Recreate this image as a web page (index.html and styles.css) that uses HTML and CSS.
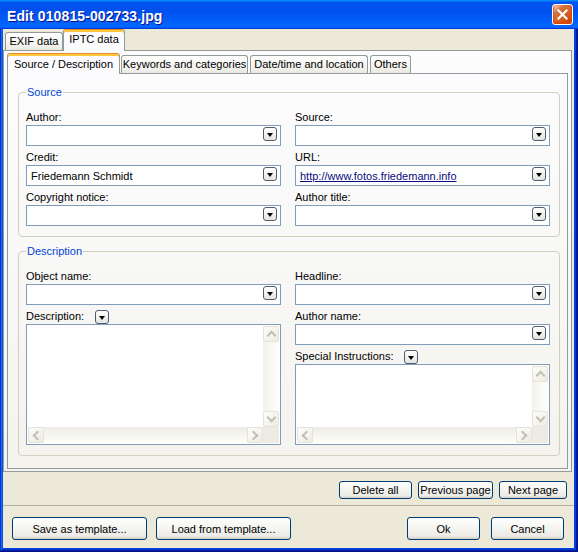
FILE: index.html
```html
<!DOCTYPE html>
<html>
<head>
<meta charset="utf-8">
<title>Edit 010815-002733.jpg</title>
<link rel="stylesheet" href="styles.css">
</head>
<body>
<div class="window">
  <div class="titlebar">
    <span class="title">Edit 010815-002733.jpg</span>
    <span class="close"><svg width="13" height="13" viewBox="0 0 13 13"><path d="M2.5 2.5 L10.5 10.5 M10.5 2.5 L2.5 10.5" stroke="#fff" stroke-width="2.2" stroke-linecap="square"/></svg></span>
  </div>
  <div class="client">
    <div class="tabs outer-tabs">
      <div class="tab tab-exif">EXIF data</div>
      <div class="tab tab-iptc active">IPTC data</div>
    </div>
    <div class="panel outer-panel">
      <div class="tabs inner-tabs">
        <div class="tab tab-source active">Source / Description</div>
        <div class="tab tab-keywords">Keywords and categories</div>
        <div class="tab tab-date">Date/time and location</div>
        <div class="tab tab-others">Others</div>
      </div>
      <div class="panel inner-panel">
        <fieldset class="group group-source">
          <legend>Source</legend>
          <div class="cols">
            <div class="col">
              <div class="label">Author:</div>
              <div class="combo"><span class="value"></span><span class="dd"></span></div>
              <div class="label">Credit:</div>
              <div class="combo"><span class="value">Friedemann Schmidt</span><span class="dd"></span></div>
              <div class="label">Copyright notice:</div>
              <div class="combo"><span class="value"></span><span class="dd"></span></div>
            </div>
            <div class="col">
              <div class="label">Source:</div>
              <div class="combo"><span class="value"></span><span class="dd"></span></div>
              <div class="label">URL:</div>
              <div class="combo"><span class="value link">http://www.fotos.friedemann.info</span><span class="dd"></span></div>
              <div class="label">Author title:</div>
              <div class="combo"><span class="value"></span><span class="dd"></span></div>
            </div>
          </div>
        </fieldset>
        <fieldset class="group group-desc">
          <legend>Description</legend>
          <div class="cols">
            <div class="col">
              <div class="label">Object name:</div>
              <div class="combo"><span class="value"></span><span class="dd"></span></div>
              <div class="label">Description:<span class="dd"></span></div>
              <div class="memo memo-tall">
                <div class="memo-text"></div>
                <div class="vscroll"><span class="sbtn up"></span><span class="sbtn down"></span></div>
                <div class="hscroll"><span class="sbtn left"></span><span class="sbtn right"></span></div>
                <div class="corner"></div>
              </div>
            </div>
            <div class="col">
              <div class="label">Headline:</div>
              <div class="combo"><span class="value"></span><span class="dd"></span></div>
              <div class="label">Author name:</div>
              <div class="combo"><span class="value"></span><span class="dd"></span></div>
              <div class="label">Special Instructions:<span class="dd"></span></div>
              <div class="memo memo-fill">
                <div class="memo-text"></div>
                <div class="vscroll"><span class="sbtn up"></span><span class="sbtn down"></span></div>
                <div class="hscroll"><span class="sbtn left"></span><span class="sbtn right"></span></div>
                <div class="corner"></div>
              </div>
            </div>
          </div>
        </fieldset>
      </div>
    </div>
    <div class="page-buttons">
      <button class="btn btn-small btn-delete">Delete all</button>
      <button class="btn btn-small btn-prev">Previous page</button>
      <button class="btn btn-small btn-next">Next page</button>
    </div>
    <div class="separator"></div>
    <div class="footer">
      <button class="btn btn-big btn-template">Save as template...</button>
      <button class="btn btn-big btn-template btn-load">Load from template...</button>
      <span class="spacer"></span>
      <button class="btn btn-big btn-ok">Ok</button>
      <button class="btn btn-big btn-cancel">Cancel</button>
    </div>
  </div>
</div>
</body>
</html>
```

FILE: styles.css
```css
* { box-sizing: border-box; }
html, body { margin: 0; padding: 0; }
body {
  width: 578px;
  height: 552px;
  overflow: hidden;
  font-family: "Liberation Sans", Arial, sans-serif;
  font-size: 11px;
  color: #000;
  background: #fff;
}

.window {
  width: 578px;
  height: 552px;
  display: flex;
  flex-direction: column;
  background: #0842D8;
  box-shadow: inset -1px -1px #00138c, inset 1px 1px #0831d9, inset -2px -2px #001ea0, inset 2px 2px #166aee, inset -3px -3px #003bda, inset 3px 3px #0855dd;
}

.titlebar {
  flex: none;
  height: 29px;
  display: flex;
  align-items: center;
  justify-content: space-between;
  padding: 0 5px 0 7px;
  background: linear-gradient(180deg, #0997ff 0%, #0053ee 8%, #0050ee 40%, #0066ff 88%, #0066ff 93%, #005bff 95%, #003dd7 96%, #003dd7 100%);
}
.title {
  color: #fff;
  font-weight: bold;
  font-size: 14px;
  padding-top: 2px;
  text-shadow: 1px 1px #0f1089;
  letter-spacing: 0.1px;
}
.close {
  width: 21px;
  height: 21px;
  border: 1px solid #fff;
  border-radius: 3px;
  display: flex;
  align-items: center;
  justify-content: center;
  background: radial-gradient(circle at 90% 90%, #cc4600 0%, #dc6527 55%, #cd7546 70%, #ffccb2 90%, #fff 100%);
  box-shadow: inset 0 -1px 2px 1px #da4600;
}

.client {
  flex: 1;
  margin: 0 4px 4px 3px;
  background: #ECE9D8;
  display: flex;
  flex-direction: column;
}

/* tabs */
.tabs { display: flex; align-items: flex-end; }
.tab {
  height: 18px;
  border: 1px solid #919B9C;
  border-bottom: none;
  border-radius: 3px 3px 0 0;
  background: linear-gradient(#FFFFFF, #FAFAF8 30%, #F1F0EA 75%, #E9E8E1);
  text-align: center;
  line-height: 16px;
  white-space: nowrap;
  margin-right: 2px;
}
.tab.active {
  height: 22px;
  margin-bottom: -1px;
  margin-right: 1px;
  padding-top: 1px;
  border-top: 1px solid #E68B2C;
  box-shadow: inset 0 2px #FFC73C;
  background: #FCFCFE;
  position: relative;
  z-index: 1;
}
.outer-tabs { height: 21px; padding-left: 2px; }
.tab-exif { width: 58px; margin-right: 0; }
.tab-iptc { width: 62px; }

.inner-tabs { height: 20px; padding-left: 3px; }
.inner-tabs .tab.active { height: 21px; padding-top: 2px; }
.tab-source { width: 113px; }
.tab-keywords { width: 127px; }
.tab-date { width: 118px; }
.tab-others { width: 41px; }

.panel {
  border: 1px solid #919B9C;
  background: linear-gradient(#FCFCFE, #F4F3EE);
}
.outer-panel {
  height: 422px;
  margin-right: 2px;
  padding: 2px 0;
}
.inner-panel {
  height: 396px;
  margin: 0 3px;
  display: flex;
  flex-direction: column;
}

/* group boxes */
.group {
  border: 1px solid #D0D0BF;
  border-radius: 4px;
  margin: 12px 7px 0 10px;
  padding: 7px 9px 10px 7px;
  min-width: 0;
}
.group-desc { margin-top: 8px; }
.group legend {
  color: #0046D5;
  line-height: 13px;
  padding: 0 1px;
}
.cols {
  display: grid;
  grid-template-columns: 255px 255px;
  column-gap: 14px;
}
.col { display: flex; flex-direction: column; }
.label {
  height: 19px;
  padding-top: 5px;
  line-height: 13px;
  display: flex;
  align-items: flex-start;
  white-space: nowrap;
}
.label .dd { margin-left: 11px; }

.combo {
  height: 21px;
  border: 1px solid #7F9DB9;
  background: #fff;
  display: flex;
  align-items: flex-start;
  padding: 1px 3px 0 4px;
}
.value {
  flex: 1;
  line-height: 18px;
  white-space: nowrap;
  overflow: hidden;
}
.value.link { color: #0A0A80; text-decoration: underline; }

.dd {
  flex: none;
  width: 14px;
  height: 14px;
  border: 1px solid #4E5B70;
  border-radius: 3px;
  background: linear-gradient(#FFFFFF, #E4E4DF);
  display: flex;
  align-items: center;
  justify-content: center;
}
.dd::before {
  content: "";
  border-top: 4px solid #000;
  border-left: 3.5px solid transparent;
  border-right: 3.5px solid transparent;
  margin-top: 1px;
}

/* memo with disabled scrollbars */
.memo {
  border: 1px solid #7F9DB9;
  background: #fff;
  padding: 1px;
  display: grid;
  grid-template-columns: 1fr 16px;
  grid-template-rows: 1fr 16px;
}
.memo-tall { height: 121px; }
.memo-fill { flex: 1; }
.vscroll {
  display: flex;
  flex-direction: column;
  justify-content: space-between;
  background: linear-gradient(to right, #F3F1EC, #FEFEFB);
}
.hscroll {
  display: flex;
  justify-content: space-between;
  background: linear-gradient(#EEECE4, #FDFDFA);
}
.corner { background: #EDEBE3; }
.sbtn {
  width: 16px;
  height: 16px;
  border: 1px solid #E6E4DA;
  border-radius: 2px;
  background: linear-gradient(135deg, #FDFDFA, #EDEBE2);
  display: flex;
  align-items: center;
  justify-content: center;
}
.sbtn::before {
  content: "";
  width: 5px;
  height: 5px;
  border-left: 2px solid #C2C0B4;
  border-top: 2px solid #C2C0B4;
}
.sbtn.up::before { transform: rotate(45deg); margin-top: 3px; }
.sbtn.down::before { transform: rotate(225deg); margin-top: -3px; }
.sbtn.left::before { transform: rotate(-45deg); margin-left: 3px; }
.sbtn.right::before { transform: rotate(135deg); margin-left: -3px; }

/* buttons */
.btn {
  font: inherit;
  color: #000;
  padding: 0;
  border: 1px solid #003C74;
  border-radius: 3px;
  background: linear-gradient(180deg, #FFFFFF 0%, #F6F6F3 40%, #ECEBE6 85%, #D6D0C5 100%);
  text-align: center;
  white-space: nowrap;
}
.page-buttons {
  display: flex;
  justify-content: flex-end;
  gap: 6px;
  margin-top: 9px;
  padding-right: 7px;
}
.btn-small { height: 18px; line-height: 16px; }
.btn-delete { width: 73px; }
.btn-prev { width: 75px; }
.btn-next { width: 68px; }

.separator {
  margin-top: 6px;
  border-top: 1px solid #B4B1A4;
}
.footer {
  display: flex;
  margin-top: 11px;
  padding: 0 10px 0 9px;
}
.btn-big { height: 23px; }
.btn-template { width: 135px; }
.btn-load { margin-left: 9px; }
.spacer { flex: 1; }
.btn-ok { width: 73px; }
.btn-cancel { width: 73px; margin-left: 11px; }
```
